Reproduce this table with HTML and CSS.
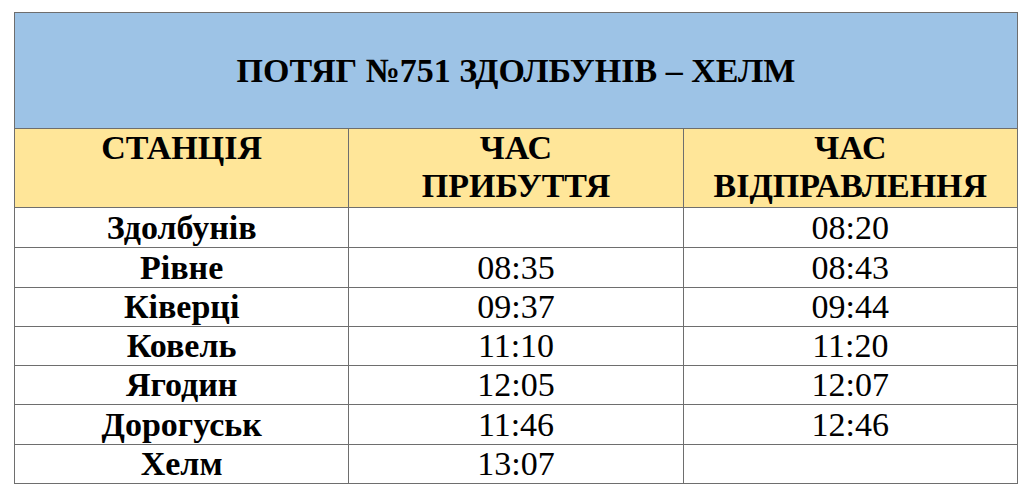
FILE: index.html
```html
<!DOCTYPE html>
<html lang="uk">
<head>
<meta charset="utf-8">
<link rel="stylesheet" href="styles.css">
</head>
<body>
<table class="schedule">
  <colgroup>
    <col class="col">
    <col class="col">
    <col class="col">
  </colgroup>
  <thead>
    <tr class="title-row">
      <th colspan="3" class="title">ПОТЯГ №751 ЗДОЛБУНІВ – ХЕЛМ</th>
    </tr>
    <tr class="head-row">
      <th class="head">СТАНЦІЯ</th>
      <th class="head">ЧАС<br>ПРИБУТТЯ</th>
      <th class="head">ЧАС<br>ВІДПРАВЛЕННЯ</th>
    </tr>
  </thead>
  <tbody>
    <tr class="r40"><td class="station">Здолбунів</td><td class="time"></td><td class="time">08:20</td></tr>
    <tr class="r40"><td class="station">Рівне</td><td class="time">08:35</td><td class="time">08:43</td></tr>
    <tr class="r39"><td class="station">Ківерці</td><td class="time">09:37</td><td class="time">09:44</td></tr>
    <tr class="r39"><td class="station">Ковель</td><td class="time">11:10</td><td class="time">11:20</td></tr>
    <tr class="r39"><td class="station">Ягодин</td><td class="time">12:05</td><td class="time">12:07</td></tr>
    <tr class="r40"><td class="station">Дорогуськ</td><td class="time">11:46</td><td class="time">12:46</td></tr>
    <tr class="r39"><td class="station">Хелм</td><td class="time">13:07</td><td class="time"></td></tr>
  </tbody>
</table>
</body>
</html>
```

FILE: styles.css
```css
html, body {
  margin: 0;
  padding: 0;
  background: #ffffff;
}

body {
  padding: 12px 0 0 14px;
  font-family: "Liberation Serif", "Times New Roman", serif;
  color: #000000;
}

.schedule {
  border-collapse: collapse;
  table-layout: fixed;
  width: 1004px;
  border: 1px solid #6e6e6e;
}

.col {
  width: 33.333%;
}

.schedule th,
.schedule td {
  border: 1px solid #6e6e6e;
  padding: 0;
  text-align: center;
  font-family: "Liberation Serif", "Times New Roman", serif;
}

.title-row {
  height: 116px;
}

.title {
  background: #9dc3e6;
  font-size: 34px;
  font-weight: bold;
  vertical-align: middle;
}

.head-row {
  height: 79px;
}

.head {
  background: #ffe699;
  font-size: 34px;
  line-height: 38px;
  font-weight: bold;
  vertical-align: top;
  padding-top: 2px;
}

.r40 { height: 40px; }
.r39 { height: 39px; }

.station,
.time {
  font-size: 34px;
  line-height: 36px;
  vertical-align: middle;
}

.station {
  font-weight: bold;
}
```
